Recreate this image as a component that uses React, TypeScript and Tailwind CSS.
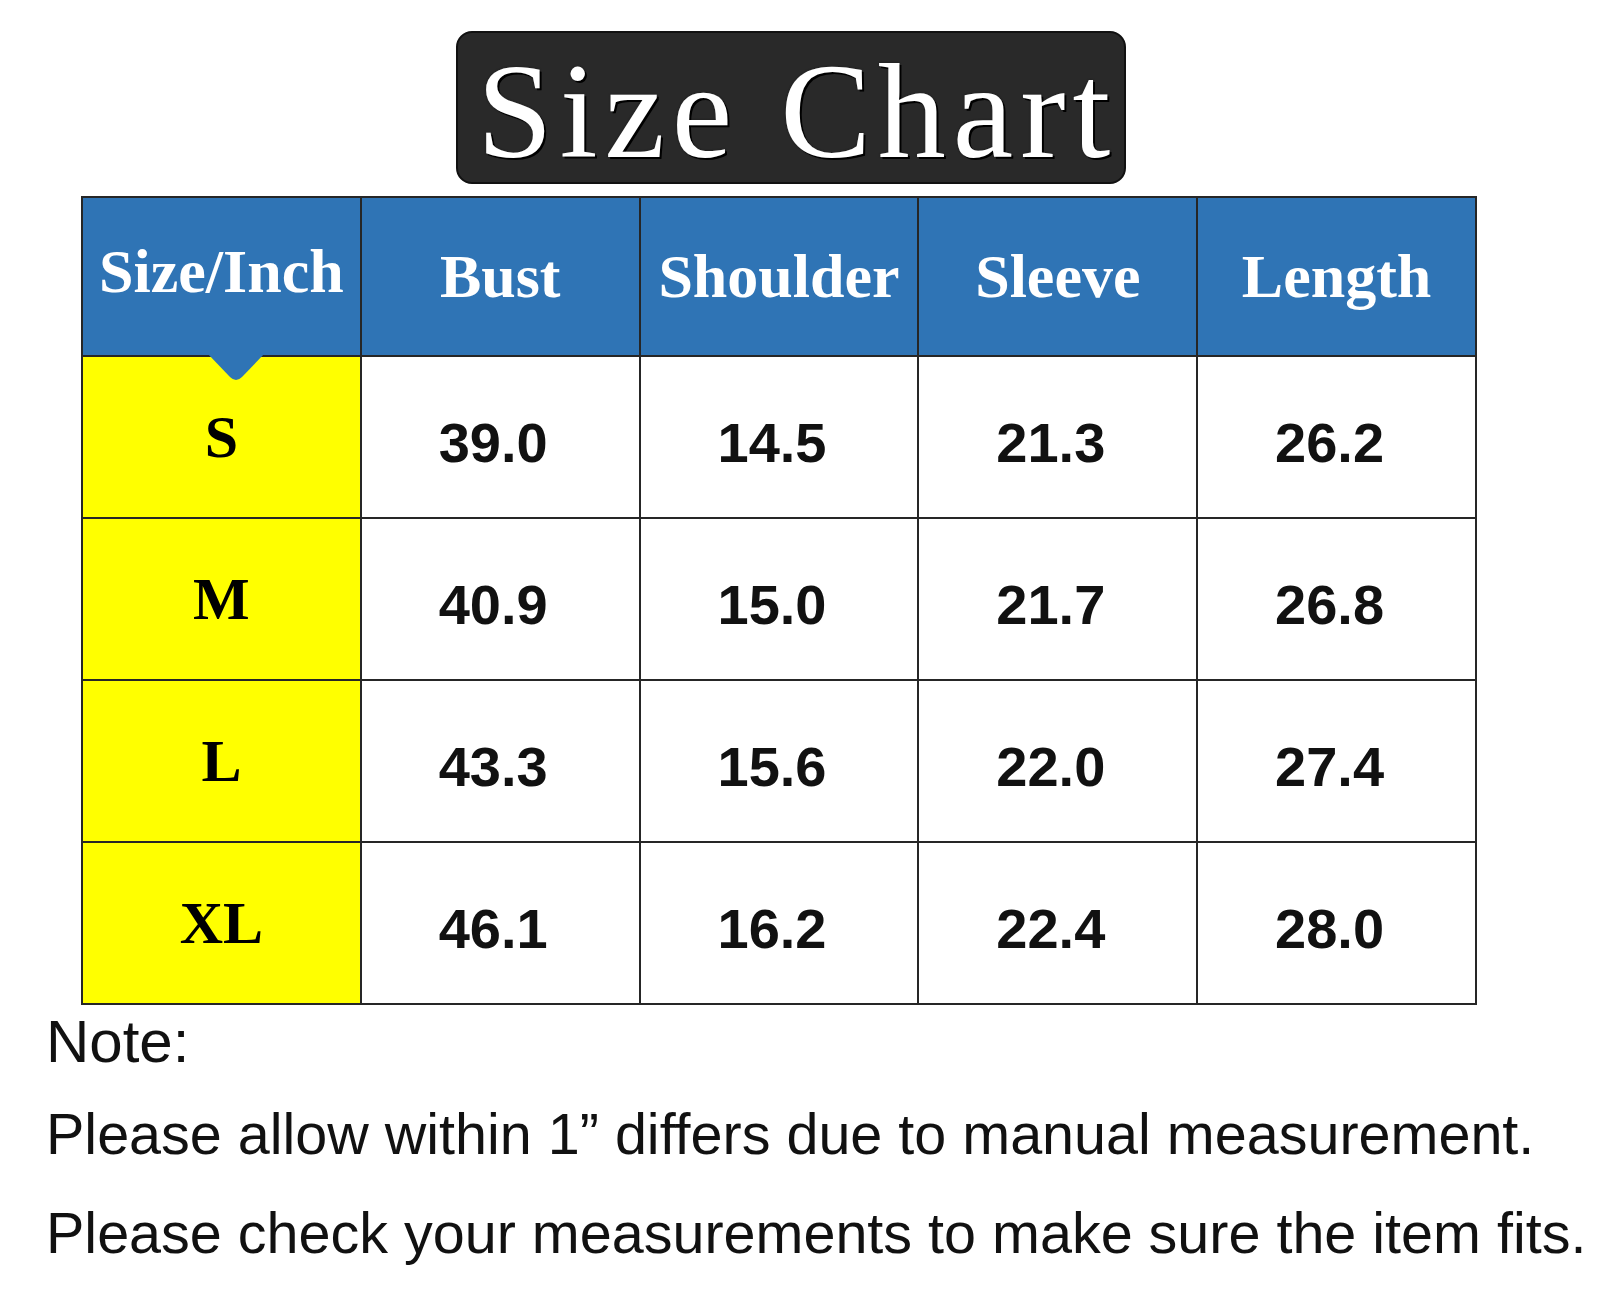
import React from 'react';

const headers = ["Size/Inch", "Bust", "Shoulder", "Sleeve", "Length"];

const rows = [
    { size: "S", values: ["39.0", "14.5", "21.3", "26.2"] },
    { size: "M", values: ["40.9", "15.0", "21.7", "26.8"] },
    { size: "L", values: ["43.3", "15.6", "22.0", "27.4"] },
    { size: "XL", values: ["46.1", "16.2", "22.4", "28.0"] },
];

const serif = "font-['Liberation_Serif','Times_New_Roman',serif]";
const sans = "font-['Liberation_Sans',Arial,sans-serif]";

export default function App() {
    return (
        <div className="w-[1600px] h-[1289px] bg-white overflow-hidden">
            {/* Title */}
            <div className="pt-[31px] pl-[456px]">
                <div className="w-[670px] h-[153px] bg-[#292929] rounded-[16px] border-2 border-[#111] pt-[10px] pl-[19px]">
                    <div
                        className={`${serif} text-[136px] leading-[136px] tracking-[7px] text-white [text-shadow:0_0_2px_#000,2px_2px_0_#000,0_0_1px_#888]`}
                    >
                        Size Chart
                    </div>
                </div>
            </div>

            {/* Table */}
            <div className="mt-[12px] ml-[81px] w-[1396px] grid grid-cols-5 border-l-2 border-t-2 border-[#262626]">
                {headers.map((h, i) => (
                    <div
                        key={h}
                        className={`relative h-[159px] bg-[#2f74b5] border-r-2 border-b-2 border-[#262626] flex items-center justify-center ${serif} font-bold text-[62px] text-white ${i === 0 ? "pb-[10px]" : ""}`}
                    >
                        {h}
                        {i === 0 && (
                            <svg
                                className="absolute left-[124px] top-full -mt-[2px] z-10"
                                width="58"
                                height="30"
                                viewBox="0 0 58 30"
                            >
                                <path d="M0 0 L58 0 L35 24 Q29 30 23 24 Z" fill="#2f74b5" />
                            </svg>
                        )}
                    </div>
                ))}
                {rows.map((r) => (
                    <React.Fragment key={r.size}>
                        <div
                            className={`h-[162px] bg-[#ffff00] border-r-2 border-b-2 border-[#262626] flex items-center justify-center ${serif} font-bold text-[60px] text-black`}
                        >
                            {r.size}
                        </div>
                        {r.values.map((v, j) => (
                            <div
                                key={j}
                                className={`h-[162px] bg-white border-r-2 border-b-2 border-[#262626] flex items-center justify-center pt-[12px] pr-[14px] ${sans} font-bold text-[56px] text-[#111]`}
                            >
                                {v}
                            </div>
                        ))}
                    </React.Fragment>
                ))}
            </div>

            {/* Note */}
            <div className={`pl-[46px] ${sans} text-[#111]`}>
                <div className="mt-[7px] text-[60px] leading-[60px]">Note:</div>
                <div className="mt-[13px] text-[57.5px] leading-[99px] whitespace-nowrap">
                    Please allow within 1” differs due to manual measurement.
                </div>
                <div className="text-[57.5px] leading-[99px] whitespace-nowrap">
                    Please check your measurements to make sure the item fits.
                </div>
            </div>
        </div>
    );
}
